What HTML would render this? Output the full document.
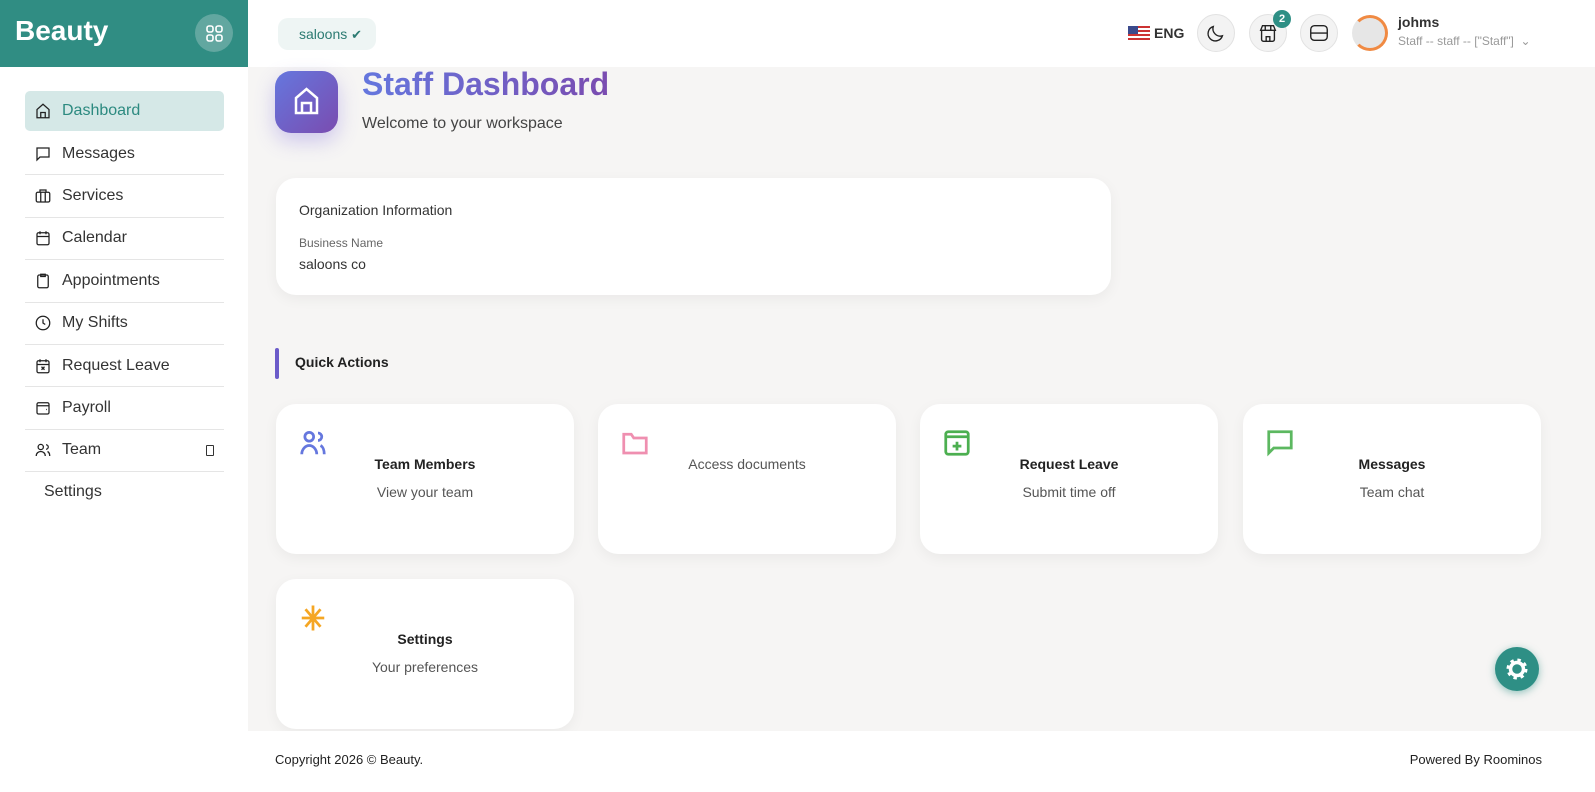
<!DOCTYPE html>
<html><head><meta charset="utf-8"><style>
*{box-sizing:border-box;margin:0;padding:0}
body{width:1595px;height:792px;overflow:hidden;background:#f6f5f4;font-family:"Liberation Sans",sans-serif;color:#333;position:relative}
.side{position:absolute;left:0;top:0;width:248px;height:792px;background:#fff}
.brand{height:67px;background:#308d83;position:relative}
.brand b{position:absolute;left:15px;top:15px;color:#fff;font-size:28px}
.brand .g{position:absolute;left:195px;top:14px;width:38px;height:38px;border-radius:50%;background:#62a7a0}
.nav{position:absolute;left:25px;top:91px;width:199px}
.it{height:42.4px;border-bottom:1px solid #e5e5e5;display:flex;align-items:center;font-size:16px;color:#333;padding-left:9px}
.it svg{width:18px;height:18px;margin-right:10px;fill:none;stroke:#222;stroke-width:1.7}
.it.a{background:#d5e8e7;border-radius:5px;color:#2c8a80;height:40px;margin-bottom:2px;border:none}
.top{position:absolute;left:248px;top:0;right:0;height:67px;background:#fff}
.chip{position:absolute;left:30px;top:18px;width:98px;height:32px;background:#eef5f4;border-radius:10px;color:#2c7b72;font-size:14px;padding:8px 0 0 21px}
.rb{position:absolute;top:14px;width:38px;height:38px;border-radius:50%;background:#f3f3f3;border:1px solid #e2e2e2}
.rb svg{position:absolute;left:7px;top:7px;width:22px;height:22px;fill:none;stroke:#222;stroke-width:1.5}
.card{position:absolute;background:#fff;border-radius:20px;box-shadow:0 4px 14px rgba(0,0,0,.05)}
.qa{width:298px;height:150px;text-align:center}
.qa svg{position:absolute;left:22px;top:24px;width:30px;height:30px;fill:none;stroke-width:2.2}
.qa h4{position:absolute;left:0;right:0;top:52px;font-size:14px;color:#222}
.qa p{position:absolute;left:0;right:0;top:80px;font-size:14px;color:#555}
</style></head><body>
<div class="side">
<div class="brand"><b>Beauty</b><div class="g"><svg width="38" height="38" viewBox="0 0 38 38" fill="none" stroke="#fff" stroke-width="1.6"><rect x="12" y="12" width="6" height="6" rx="2"/><rect x="21" y="12" width="6" height="6" rx="2"/><rect x="12" y="21" width="6" height="6" rx="2"/><rect x="21" y="21" width="6" height="6" rx="2"/></svg></div></div>
<div class="nav">
<div class="it a"><svg viewBox="0 0 24 24"><path d="M4 21V10l8-7 8 7v11zM9 21v-7h6v7"/></svg>Dashboard</div>
<div class="it"><svg viewBox="0 0 24 24"><path d="M4 4h16v12H8l-4 4z"/></svg>Messages</div>
<div class="it"><svg viewBox="0 0 24 24"><rect x="3" y="7" width="18" height="13" rx="2"/><path d="M8 7V4h8v3M9 7v13M15 7v13"/></svg>Services</div>
<div class="it"><svg viewBox="0 0 24 24"><rect x="4" y="5" width="16" height="16" rx="2"/><path d="M4 10h16M8 3v4M16 3v4"/></svg>Calendar</div>
<div class="it"><svg viewBox="0 0 24 24"><rect x="5" y="4" width="14" height="17" rx="2"/><path d="M9 3h6v3H9z"/></svg>Appointments</div>
<div class="it"><svg viewBox="0 0 24 24"><circle cx="12" cy="12" r="9"/><path d="M12 7v5l3 2"/></svg>My Shifts</div>
<div class="it"><svg viewBox="0 0 24 24"><rect x="4" y="5" width="16" height="16" rx="2"/><path d="M4 10h16M8 3v4M16 3v4M10 13l4 4M14 13l-4 4"/></svg>Request Leave</div>
<div class="it"><svg viewBox="0 0 24 24"><rect x="4" y="5" width="16" height="15" rx="2"/><path d="M4 9h16M16 14h1"/></svg>Payroll</div>
<div class="it"><svg viewBox="0 0 24 24"><circle cx="9" cy="8" r="3.5"/><path d="M3 20c0-4 3-6 6-6s6 2 6 6M16 5a3 3 0 010 6M18 14c2 1 3 3 3 6"/></svg>Team<span style="margin-left:auto;margin-right:10px;width:8px;height:11px;border:1px solid #333;border-radius:1px"></span></div>
<div style="padding:11px 0 0 19px;font-size:16px">Settings</div>
</div></div>
<div class="top">
<div class="chip">saloons <span style="font-size:13px;color:#2c7b72">✔</span></div>
<div style="position:absolute;left:880px;top:26px;width:22px;height:15px;background:repeating-linear-gradient(#c33 0 2px,#fff 2px 4px)"><div style="width:10px;height:8px;background:#3b4a8c"></div></div>
<div style="position:absolute;left:906px;top:25px;font-weight:bold;font-size:14px">ENG</div>
<div class="rb" style="left:949px"><svg viewBox="0 0 24 24"><path d="M19 15A8 8 0 019 5a8 8 0 1010 10z"/></svg></div>
<div class="rb" style="left:1001px"><svg viewBox="0 0 24 24"><path d="M5 9v10a2 2 0 002 2h10a2 2 0 002-2V9M4 9l2-5h12l2 5zM9 4v5M15 4v5M10 21v-5h4v5"/></svg></div>
<div style="position:absolute;left:1025px;top:10px;width:18px;height:18px;border-radius:50%;background:#2e8f85;color:#fff;font-size:11px;font-weight:bold;text-align:center;line-height:18px">2</div>
<div class="rb" style="left:1052px"><svg viewBox="0 0 24 24"><rect x="3" y="4" width="18" height="16" rx="4"/><path d="M3 12h18"/></svg></div>
<div style="position:absolute;left:1104px;top:15px;width:36px;height:36px;border-radius:50%;background:#e6e6e6;border:3px solid #f08a43;border-left-color:#e6e6e6"></div>
<div style="position:absolute;left:1150px;top:14px;font-weight:bold;font-size:14px;color:#333">johms</div>
<div style="position:absolute;left:1150px;top:34px;font-size:12px;color:#999">Staff -- staff -- ["Staff"] &nbsp;⌄</div>
</div>
<div style="position:absolute;left:275px;top:71px;width:63px;height:62px;border-radius:16px;background:linear-gradient(135deg,#6577de,#7a4cb0);box-shadow:0 8px 20px rgba(110,90,220,.3)"><svg width="63" height="62" viewBox="0 0 63 62" fill="none" stroke="#fff" stroke-width="2.5"><path d="M21 42V27l10.5-9 10.5 9v15zM27 42v-10h9v10"/></svg></div>
<div style="position:absolute;left:362px;top:66px;font-size:32px;font-weight:bold;background:linear-gradient(90deg,#6577de,#7a4cb0);-webkit-background-clip:text;color:transparent">Staff Dashboard</div>
<div style="position:absolute;left:362px;top:115px;font-size:16px;color:#444">Welcome to your workspace</div>
<div class="card" style="left:276px;top:178px;width:835px;height:117px">
<div style="position:absolute;left:23px;top:24px;font-size:14px">Organization Information</div>
<div style="position:absolute;left:23px;top:58px;font-size:12px;color:#666">Business Name</div>
<div style="position:absolute;left:23px;top:78px;font-size:14px">saloons co</div></div>
<div style="position:absolute;left:275px;top:348px;width:4px;height:31px;background:#6b5bc9;border-radius:2px"></div>
<div style="position:absolute;left:295px;top:354px;font-size:14px;font-weight:bold;color:#222">Quick Actions</div>
<div class="card qa" style="left:276px;top:404px"><svg viewBox="0 0 24 24" stroke="#6577de" style="left:22px"><circle cx="9" cy="7" r="3.5"/><path d="M3 21c0-4 3-7 6-7s6 3 6 7M16 4a3 3 0 010 6M18 14c2 1 3 4 3 7"/></svg><h4>Team Members</h4><p>View your team</p></div>
<div class="card qa" style="left:598px;top:404px"><svg viewBox="0 0 24 24" stroke="#ef8fb0"><path d="M3 5h6l2 3h10v12H3z"/></svg><p style="top:52px">Access documents</p></div>
<div class="card qa" style="left:920px;top:404px"><svg viewBox="0 0 24 24" stroke="#4caf50"><rect x="3" y="3" width="18" height="18" rx="2"/><path d="M3 7h18M12 11v7M8.5 14.5h7"/></svg><h4>Request Leave</h4><p>Submit time off</p></div>
<div class="card qa" style="left:1243px;top:404px"><svg viewBox="0 0 24 24" stroke="#5cb860"><path d="M3 3h18v13H7l-4 4z"/></svg><h4>Messages</h4><p>Team chat</p></div>
<div class="card qa" style="left:276px;top:579px"><svg viewBox="0 0 24 24" stroke="#f5a623"><path d="M12 2v20M3 12h18M6 5l12 14M18 5L6 19"/></svg><h4>Settings</h4><p>Your preferences</p></div>
<div style="position:absolute;left:1495px;top:647px;width:44px;height:44px;border-radius:50%;background:#2e8f85;box-shadow:0 2px 8px rgba(46,143,133,.5)"><svg width="44" height="44" viewBox="0 0 44 44"><circle cx="22" cy="22" r="8" fill="none" stroke="#fff" stroke-width="5" stroke-dasharray="3 3.3"/><circle cx="22" cy="22" r="6.5" fill="none" stroke="#fff" stroke-width="3.5"/></svg></div>
<div style="position:absolute;left:248px;top:731px;right:0;height:61px;background:#fff">
<div style="position:absolute;left:27px;top:21px;font-size:13px;color:#222">Copyright 2026 © Beauty.</div>
<div style="position:absolute;right:53px;top:21px;font-size:13px;color:#222">Powered By Roominos</div></div>
</body></html>
